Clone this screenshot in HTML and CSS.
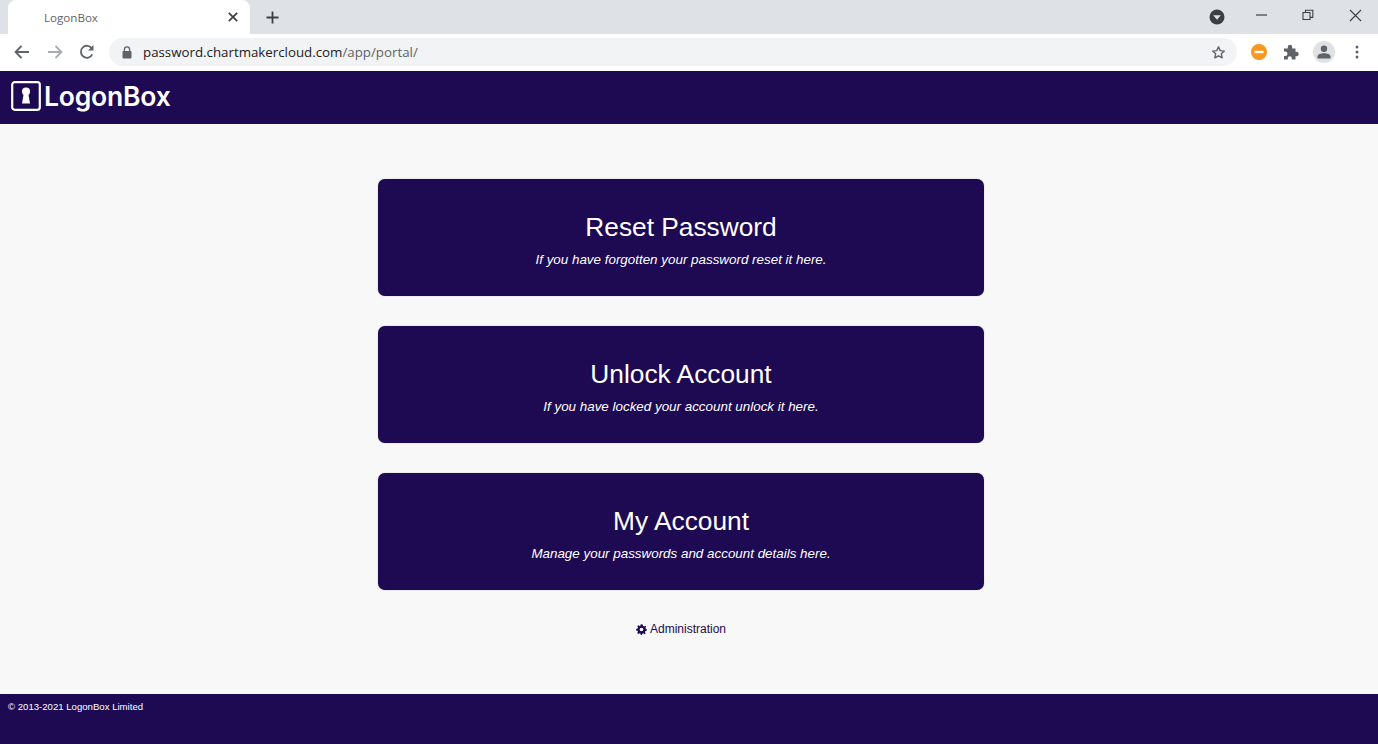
FILE: index.html
```html
<!DOCTYPE html>
<html lang="en">
<head>
    <meta charset="UTF-8">
    <meta name="viewport" content="width=device-width, initial-scale=1.0">
    <title>LogonBox</title>
    <link rel="stylesheet" href="styles.css">
</head>
<body>
    <div class="chrome">
        <div class="tab-strip">
            <div class="tab">
                <span class="tab-title">LogonBox</span>
                <svg class="tab-close" width="10" height="10" viewBox="0 0 10 10"><path d="M0.8 0.8L9.2 9.2M9.2 0.8L0.8 9.2" stroke="#3c4043" stroke-width="1.7"/></svg>
            </div>
            <svg class="new-tab" width="13" height="13" viewBox="0 0 13 13"><path d="M6.5 0.5V12.5M0.5 6.5H12.5" stroke="#3c4043" stroke-width="1.8"/></svg>
            <div class="window-controls">
                <svg class="tab-search" width="16" height="16" viewBox="0 0 16 16"><circle cx="8" cy="8" r="7.5" fill="#3c4043"/><path d="M4.2 6.3H11.8L8 10.8Z" fill="#dee1e6"/></svg>
                <svg class="win-min" width="11" height="2" viewBox="0 0 11 2"><path d="M0 1H11" stroke="#3c4043" stroke-width="1.2"/></svg>
                <svg class="win-restore" width="12" height="12" viewBox="0 0 12 12"><path d="M1 3.5H8V10.5H1ZM3.5 3.5V1.2H10.8V8.4H8" fill="none" stroke="#3c4043" stroke-width="1.1"/></svg>
                <svg class="win-close" width="13" height="13" viewBox="0 0 13 13"><path d="M1 1L12 12M12 1L1 12" stroke="#3c4043" stroke-width="1.1"/></svg>
            </div>
        </div>
        <div class="toolbar">
            <svg class="nav-icon" width="16" height="14" viewBox="0 0 16 14"><path d="M15 7H2M7.5 1L1.5 7L7.5 13" fill="none" stroke="#5f6368" stroke-width="1.8"/></svg>
            <svg class="nav-icon" width="16" height="14" viewBox="0 0 16 14"><path d="M1 7H14M8.5 1L14.5 7L8.5 13" fill="none" stroke="#a9acb0" stroke-width="1.8"/></svg>
            <svg class="nav-icon reload" width="16" height="16" viewBox="0 0 16 16"><path d="M13.3 10.4A6 6 0 1 1 13 4.6" fill="none" stroke="#5f6368" stroke-width="1.8"/><path d="M14.5 1V6.5H9Z" fill="#5f6368"/></svg>
            <div class="omnibox">
                <svg class="lock" width="10" height="13" viewBox="0 0 10 13"><path d="M2.4 5V3.4a2.6 2.6 0 0 1 5.2 0V5" fill="none" stroke="#5f6368" stroke-width="1.3"/><rect x="0.5" y="5" width="9" height="7.5" rx="1" fill="#5f6368"/></svg>
                <span class="url">password.chartmakercloud.com<span class="url-path">/app/portal/</span></span>
                <svg class="star" width="15" height="15" viewBox="0 0 24 24"><path d="M12 3l2.8 6 6.6.7-4.9 4.4 1.4 6.5L12 17.3l-5.9 3.3 1.4-6.5-4.9-4.4 6.6-.7z" fill="none" stroke="#5f6368" stroke-width="2.2" stroke-linejoin="round"/></svg>
            </div>
            <svg class="ext-icon ext-blocker" width="16" height="16" viewBox="0 0 16 16"><circle cx="8" cy="8" r="8" fill="#f9971e"/><rect x="3.5" y="6.8" width="9" height="2.4" fill="#fff"/></svg>
            <svg class="ext-icon" width="16" height="16" viewBox="0 0 16 16"><path d="M1 4.500H4.800V3A2.200 2.200 0 0 1 9.200 3V4.500H12.500V7.800H13.500A2.200 2.200 0 0 1 13.500 12.200H12.500V15.500H8.800V14.200A2 2 0 0 0 4.800 14.200V15.500H1V12H2.200A2.300 2.300 0 0 0 2.200 7.400H1Z" fill="#5f6368"/></svg>
            <div class="avatar">
                <svg width="14" height="14" viewBox="0 0 14 14"><circle cx="7" cy="3.700" r="3.200" fill="#5f6368"/><path d="M0.500 13.500V11.500C0.500 9.500 4 8.300 7 8.300S13.500 9.500 13.500 11.500V13.500Z" fill="#5f6368"/></svg>
            </div>
            <svg class="menu-dots" width="4" height="14" viewBox="0 0 4 14"><circle cx="2" cy="2" r="1.500" fill="#5f6368"/><circle cx="2" cy="7" r="1.500" fill="#5f6368"/><circle cx="2" cy="12" r="1.500" fill="#5f6368"/></svg>
        </div>
    </div>

    <div class="navbar">
        <svg class="logo-mark" width="30" height="30" viewBox="0 0 30 30"><rect x="1.200" y="1.200" width="27.600" height="27.600" rx="2.500" fill="none" stroke="#fff" stroke-width="2.200"/><circle cx="15" cy="10.500" r="4" fill="#fff"/><path d="M13 11H17L19 22.500H11Z" fill="#fff"/></svg>
        <span class="logo-text">LogonBox</span>
    </div>

    <div class="main">
        <div class="card">
            <h2>Reset Password</h2>
            <p>If you have forgotten your password reset it here.</p>
        </div>
        <div class="card">
            <h2>Unlock Account</h2>
            <p>If you have locked your account unlock it here.</p>
        </div>
        <div class="card">
            <h2>My Account</h2>
            <p>Manage your passwords and account details here.</p>
        </div>
        <div class="admin-link">
            <svg width="11" height="11" viewBox="0 0 12 12"><path d="M6 0.300L7.300 0.500L7.600 2L9 2.600L10.300 1.800L11.200 3L10.200 4.200L10.700 5.300L11.900 6L11.700 7.300L10.300 7.600L9.800 9L10.500 10.300L9.300 11.200L8.100 10.200L7 10.700L6.500 11.900H5.300L5 10.500L3.700 10L2.400 10.800L1.300 9.700L2.200 8.500L1.600 7.300L0.200 7V5.500L1.600 5L2.200 3.700L1.400 2.500L2.500 1.400L3.800 2.200L4.900 1.700L5.200 0.300Z" fill="#1e0a52"/><circle cx="6" cy="6" r="2" fill="#f8f8f8"/></svg>
            <span>Administration</span>
        </div>
    </div>

    <div class="footer">© 2013-2021 LogonBox Limited</div>
</body>
</html>
```

FILE: styles.css
```css
* {
    margin: 0;
    padding: 0;
    box-sizing: border-box;
}

html, body {
    height: 100%;
}

body {
    display: flex;
    flex-direction: column;
    height: 744px;
    overflow: hidden;
    background-color: #f8f8f8;
    font-family: "Liberation Sans", Arial, sans-serif;
}

.chrome {
    flex: none;
    height: 71px;
    background-color: #fff;
}

.tab-strip {
    display: flex;
    align-items: center;
    height: 34px;
    background-color: #dee1e6;
    padding-left: 8px;
}

.tab {
    display: flex;
    align-items: center;
    width: 242px;
    height: 34px;
    padding: 0 12px 0 36px;
    background-color: #fff;
    border-radius: 8px 8px 0 0;
}

.tab-title {
    flex: 1;
    font-family: "Open Sans", sans-serif;
    font-size: 11.6px;
    color: #5f6368;
}

.new-tab {
    margin-left: 16px;
}

.window-controls {
    display: flex;
    align-items: center;
    margin-left: auto;
    padding-right: 16px;
}

.tab-search {
    margin-right: 31px;
}

.win-min {
    margin-right: 35px;
    margin-top: -4px;
}

.win-restore {
    margin-right: 35px;
    margin-top: -4px;
}

.win-close {
    margin-top: -4px;
}

.toolbar {
    display: flex;
    align-items: center;
    height: 36px;
    padding: 0 19px 0 14px;
}

.nav-icon {
    margin-right: 17px;
}

.reload {
    margin-left: -1px;
}

.omnibox {
    display: flex;
    align-items: center;
    flex: 1;
    height: 28px;
    margin-left: -3px;
    padding: 0 11px 0 13px;
    background-color: #f1f3f4;
    border-radius: 14px;
}

.lock {
    margin-right: 11px;
}

.url {
    flex: 1;
    font-family: "Open Sans", sans-serif;
    font-size: 13.3px;
    color: #202124;
}

.url-path {
    color: #5f6368;
}

.ext-icon {
    margin-left: 16px;
}

.ext-blocker {
    margin-left: 14px;
}

.avatar {
    display: flex;
    align-items: center;
    justify-content: center;
    width: 22px;
    height: 22px;
    margin-left: 14px;
    border-radius: 50%;
    background-color: #dfe1e5;
}

.menu-dots {
    margin-left: 20px;
}

.navbar {
    display: flex;
    align-items: center;
    flex: none;
    height: 53px;
    padding: 0 0 3px 11px;
    background-color: #1e0a52;
}

.logo-text {
    margin-left: 3px;
    font-family: Inter, sans-serif;
    font-size: 26.5px;
    font-weight: 600;
    letter-spacing: -0.2px;
    color: #fff;
}

.main {
    display: flex;
    flex: 1;
    flex-direction: column;
    align-items: center;
    padding: 55px 16px 0 0;
}

.card {
    width: 606px;
    height: 117px;
    margin-bottom: 30px;
    padding-top: 32px;
    text-align: center;
    color: #fff;
    background-color: #1e0a52;
    border-radius: 7px;
    box-shadow: 0 0 1px rgba(30, 10, 82, 0.5);
}

.card h2 {
    font-size: 26.3px;
    font-weight: 400;
    line-height: 32px;
}

.card p {
    margin-top: 9px;
    font-size: 13.4px;
    font-style: italic;
    line-height: 16px;
}

.admin-link {
    display: flex;
    align-items: center;
    gap: 3px;
    margin-top: 2px;
    font-size: 12px;
    color: #1e0a52;
}

.footer {
    flex: none;
    height: 50px;
    padding: 7px 8px;
    font-size: 9.6px;
    line-height: 12px;
    color: #fff;
    background-color: #1e0a52;
}
```
